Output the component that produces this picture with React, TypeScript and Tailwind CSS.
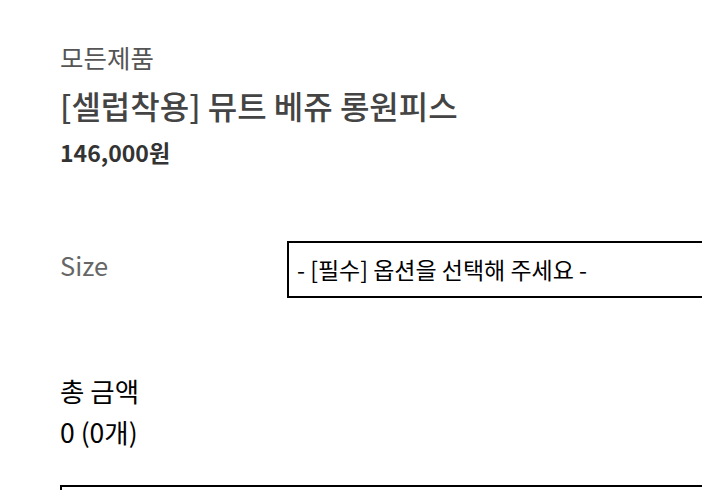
import React from "react";

const font = { fontFamily: '"Noto Sans CJK KR", "Noto Sans", sans-serif' };

export default function App() {
  return (
    <div
      className="w-[702px] h-[490px] overflow-hidden bg-white pl-[60px] pt-[41px]"
      style={font}
    >
      <div className="text-[25.5px] leading-[32px] text-[#555555]">모든제품</div>
      <div className="mt-[12px] text-[32px] leading-[40px] font-medium text-[#444444] whitespace-nowrap">
        [셀럽착용] 뮤트 베쥬 롱원피스
      </div>
      <div className="mt-[12px] text-[23px] leading-[30px] font-bold text-[#333333]">
        146,000원
      </div>
      <div className="mt-[74px] flex items-start">
        <div className="w-[227px] shrink-0 pt-[8px] text-[25.5px] leading-[32px] text-[#666666]">
          Size
        </div>
        <div className="w-[480px] shrink-0 h-[57px] border-2 border-black flex items-center pl-[8px] text-[23px] text-black whitespace-nowrap">
          - [필수] 옵션을 선택해 주세요 -
        </div>
      </div>
      <div className="mt-[77px] text-[26.5px] leading-[32px] text-black">총 금액</div>
      <div className="mt-[9px] text-[26.5px] leading-[32px] text-black">0 (0개)</div>
      <div className="mt-[37px] w-[700px] h-[60px] border-2 border-black" />
    </div>
  );
}
